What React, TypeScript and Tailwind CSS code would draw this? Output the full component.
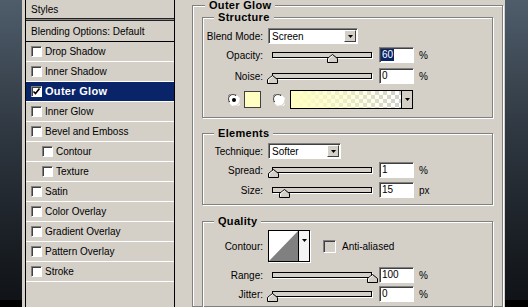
import React from "react";

const sunken =
  "border border-t-[#808080] border-l-[#808080] border-r-white border-b-white shadow-[inset_1px_1px_0_#404040] bg-white";

const styleItems = [
  { label: "Drop Shadow" },
  { label: "Inner Shadow" },
  { label: "Outer Glow", checked: true, selected: true },
  { label: "Inner Glow" },
  { label: "Bevel and Emboss" },
  { label: "Contour", indent: true },
  { label: "Texture", indent: true },
  { label: "Satin" },
  { label: "Color Overlay" },
  { label: "Gradient Overlay" },
  { label: "Pattern Overlay" },
  { label: "Stroke" },
];

function Checkbox({ checked = false }: { checked?: boolean }) {
  return (
    <div className={`flex h-[11px] w-[11px] shrink-0 items-center justify-center ${sunken}`}>
      {checked && (
        <svg width="9" height="9" viewBox="0 0 9 9">
          <polyline points="1.5,4.5 3.5,6.5 7.5,1.5" fill="none" stroke="#000" strokeWidth="1.6" />
        </svg>
      )}
    </div>
  );
}

function Radio({ checked = false }: { checked?: boolean }) {
  return (
    <svg width="12" height="12" viewBox="0 0 12 12" className="shrink-0">
      <circle cx="6" cy="6" r="5.5" fill="#fff" />
      <path d="M1 8.5 A5.2 5.2 0 0 1 8.5 1" fill="none" stroke="#808080" strokeWidth="1" />
      <path d="M1.8 8 A4.3 4.3 0 0 1 8 1.8" fill="none" stroke="#404040" strokeWidth="1" />
      <path d="M3.5 11 A5.2 5.2 0 0 0 11 3.5" fill="none" stroke="#fff" strokeWidth="1" />
      {checked && <circle cx="6" cy="6" r="2" fill="#000" />}
    </svg>
  );
}

function DropButton() {
  return (
    <div className="flex h-[12px] w-[12px] shrink-0 items-center justify-center border border-t-white border-l-white border-r-[#404040] border-b-[#404040] bg-[#d4d0c8]">
      <svg width="5" height="3" viewBox="0 0 5 3">
        <polygon points="0,0 5,0 2.5,3" fill="#000" />
      </svg>
    </div>
  );
}

function Select({ value, width }: { value: string; width: string }) {
  return (
    <div className={`ml-[5px] flex h-[16px] items-center justify-between pr-[1px] ${sunken} ${width}`}>
      <span className="pl-[3px] text-[10px]">{value}</span>
      <DropButton />
    </div>
  );
}

function Label({ text }: { text: string }) {
  return <div className="w-[60px] shrink-0 text-right text-[10px]">{text}</div>;
}

function SliderRow({
  label,
  pos,
  value,
  unit,
  highlight = false,
}: {
  label: string;
  pos: number;
  value: string;
  unit: string;
  highlight?: boolean;
}) {
  return (
    <div className="flex h-[16px] items-center">
      <Label text={label} />
      <div className="relative ml-[9px] flex h-[16px] w-[100px] items-center">
        <div className="h-[6px] w-full border border-black bg-[#d4d0c8] shadow-[1px_1px_0_#fff]" />
        <svg
          width="11"
          height="9"
          viewBox="0 0 11 9"
          className="absolute top-[7px]"
          style={{ left: pos - 5 }}
        >
          <polygon points="5.5,0.5 10.5,4.5 10.5,8.5 0.5,8.5 0.5,4.5" fill="#d4d0c8" stroke="#000" />
          <polyline points="1.5,7.5 1.5,4.8 5.5,1.6" fill="none" stroke="#fff" />
        </svg>
      </div>
      <div className={`ml-[7px] flex h-[16px] w-[35px] items-center pl-[1px] ${sunken}`}>
        <span className={`text-[10px] leading-[12px] ${highlight ? "bg-[#0a246a] px-px text-white" : "pl-px"}`}>
          {value}
        </span>
      </div>
      <span className="ml-[5px] text-[10px]">{unit}</span>
    </div>
  );
}

function Group({
  title,
  className = "",
  legendClass = "ml-[11px] leading-[12px]",
  children,
}: {
  title: string;
  className?: string;
  legendClass?: string;
  children: React.ReactNode;
}) {
  return (
    <fieldset
      className={`min-w-0 border border-[#808080] shadow-[inset_1px_1px_0_#fff,1px_1px_0_#fff] ${className}`}
    >
      <legend className={`bg-[#d4d0c8] px-[4px] text-[11px] font-bold tracking-[0.3px] ${legendClass}`}>
        {title}
      </legend>
      {children}
    </fieldset>
  );
}

function DarkStrip({ width }: { width: string }) {
  return (
    <div className={`flex h-full shrink-0 flex-col ${width}`}>
      <div className="flex-1 bg-linear-to-b from-[#4f5d6b] via-[#2b333c] to-[#101317]" />
      <div className="h-[7px] bg-black" />
    </div>
  );
}

export default function App() {
  return (
    <div
      className="flex h-[307px] w-[528px] overflow-hidden text-black"
      style={{ fontFamily: '"Liberation Sans", Arial, sans-serif' }}
    >
      <DarkStrip width="w-[22px]" />

      <div className="flex h-full flex-1 bg-[#d4d0c8] pl-[3px]">
        {/* styles list */}
        <div className="flex h-full w-[150px] shrink-0 flex-col border-x border-black">
          <div className="flex h-[18px] items-center pl-[5px] text-[10px]">Styles</div>
          <div className="h-[3px] border-y border-[#222] bg-[#888]" />
          <div className="flex h-[21px] items-center border-b border-black pl-[5px] text-[10px]">
            Blending Options: Default
          </div>
          {styleItems.map((item) => (
            <div
              key={item.label}
              className={`flex h-[20px] items-center gap-[3px] border-b border-white ${
                item.indent ? "pl-[16px]" : "pl-[5px]"
              } ${item.selected ? "bg-[#0a246a] text-[11px] font-bold tracking-[0.3px] text-white" : "text-[10px]"}`}
            >
              <Checkbox checked={item.checked} />
              <span>{item.label}</span>
            </div>
          ))}
        </div>

        {/* options */}
        <Group
          title="Outer Glow"
          legendClass="ml-[3px] leading-[10px]"
          className="ml-[17px] w-[311px] px-[9px] pt-[1px]"
        >
          <Group title="Structure" className="pb-[8px]">
            <div className="mt-[5px] flex h-[16px] items-center">
              <Label text="Blend Mode:" />
              <Select value="Screen" width="w-[90px]" />
            </div>
            <div className="mt-[3px]">
              <SliderRow label="Opacity:" pos={60} value="60" unit="%" highlight />
            </div>
            <div className="mt-[5px]">
              <SliderRow label="Noise:" pos={0} value="0" unit="%" />
            </div>
            <div className="mt-[6px] flex h-[19px] items-center pl-[25px]">
              <Radio checked />
              <div className="ml-[4px] h-[17px] w-[17px] border border-[#404040] bg-[#ffffc2]" />
              <div className="ml-[12px]">
                <Radio />
              </div>
              <div className="ml-[5px] flex h-[19px] w-[123px] border border-black">
                <div className="flex-1 bg-[repeating-conic-gradient(#cfcfcf_0_25%,#ffffff_0_50%)] bg-[length:8px_8px]">
                  <div className="h-full w-full bg-linear-to-r from-[#ffffc2] via-[#ffffc2]/60 to-transparent" />
                </div>
                <div className="flex w-[11px] items-center justify-center border-l border-black bg-[#d4d0c8]">
                  <svg width="5" height="3" viewBox="0 0 5 3">
                    <polygon points="0,0 5,0 2.5,3" fill="#000" />
                  </svg>
                </div>
              </div>
            </div>
          </Group>

          <Group title="Elements" className="mt-[9px] pb-[6px]">
            <div className="mt-[4px] flex h-[16px] items-center">
              <Label text="Technique:" />
              <Select value="Softer" width="w-[73px]" />
            </div>
            <div className="mt-[3px]">
              <SliderRow label="Spread:" pos={1} value="1" unit="%" />
            </div>
            <div className="mt-[4px]">
              <SliderRow label="Size:" pos={12} value="15" unit="px" />
            </div>
          </Group>

          <Group title="Quality" className="mt-[10px] pb-[24px]">
            <div className="mt-[3px] flex h-[32px] items-center">
              <Label text="Contour:" />
              <div className="ml-[5px] flex h-[32px] w-[42px] border border-black bg-white shadow-[1px_1px_0_#fff]">
                <svg width="29" height="30" viewBox="0 0 29 30" className="shrink-0">
                  <polygon points="0,30 29,0 29,30" fill="#808080" />
                </svg>
                <div className="flex flex-1 justify-center border-l border-black bg-[#f4f4f4] pt-[8px]">
                  <svg width="5" height="3" viewBox="0 0 5 3">
                    <polygon points="0,0 5,0 2.5,3" fill="#000" />
                  </svg>
                </div>
              </div>
              <div className="ml-[13px] flex items-center gap-[6px]">
                <div className="h-[13px] w-[13px] border border-t-[#808080] border-l-[#808080] border-r-white border-b-white bg-[#d4d0c8] shadow-[inset_1px_1px_0_#404040]" />
                <span className="text-[10px]">Anti-aliased</span>
              </div>
            </div>
            <div className="mt-[5px]">
              <SliderRow label="Range:" pos={100} value="100" unit="%" />
            </div>
            <div className="mt-[3px]">
              <SliderRow label="Jitter:" pos={0} value="0" unit="%" />
            </div>
          </Group>
        </Group>
      </div>

      <DarkStrip width="w-[23px]" />
    </div>
  );
}
